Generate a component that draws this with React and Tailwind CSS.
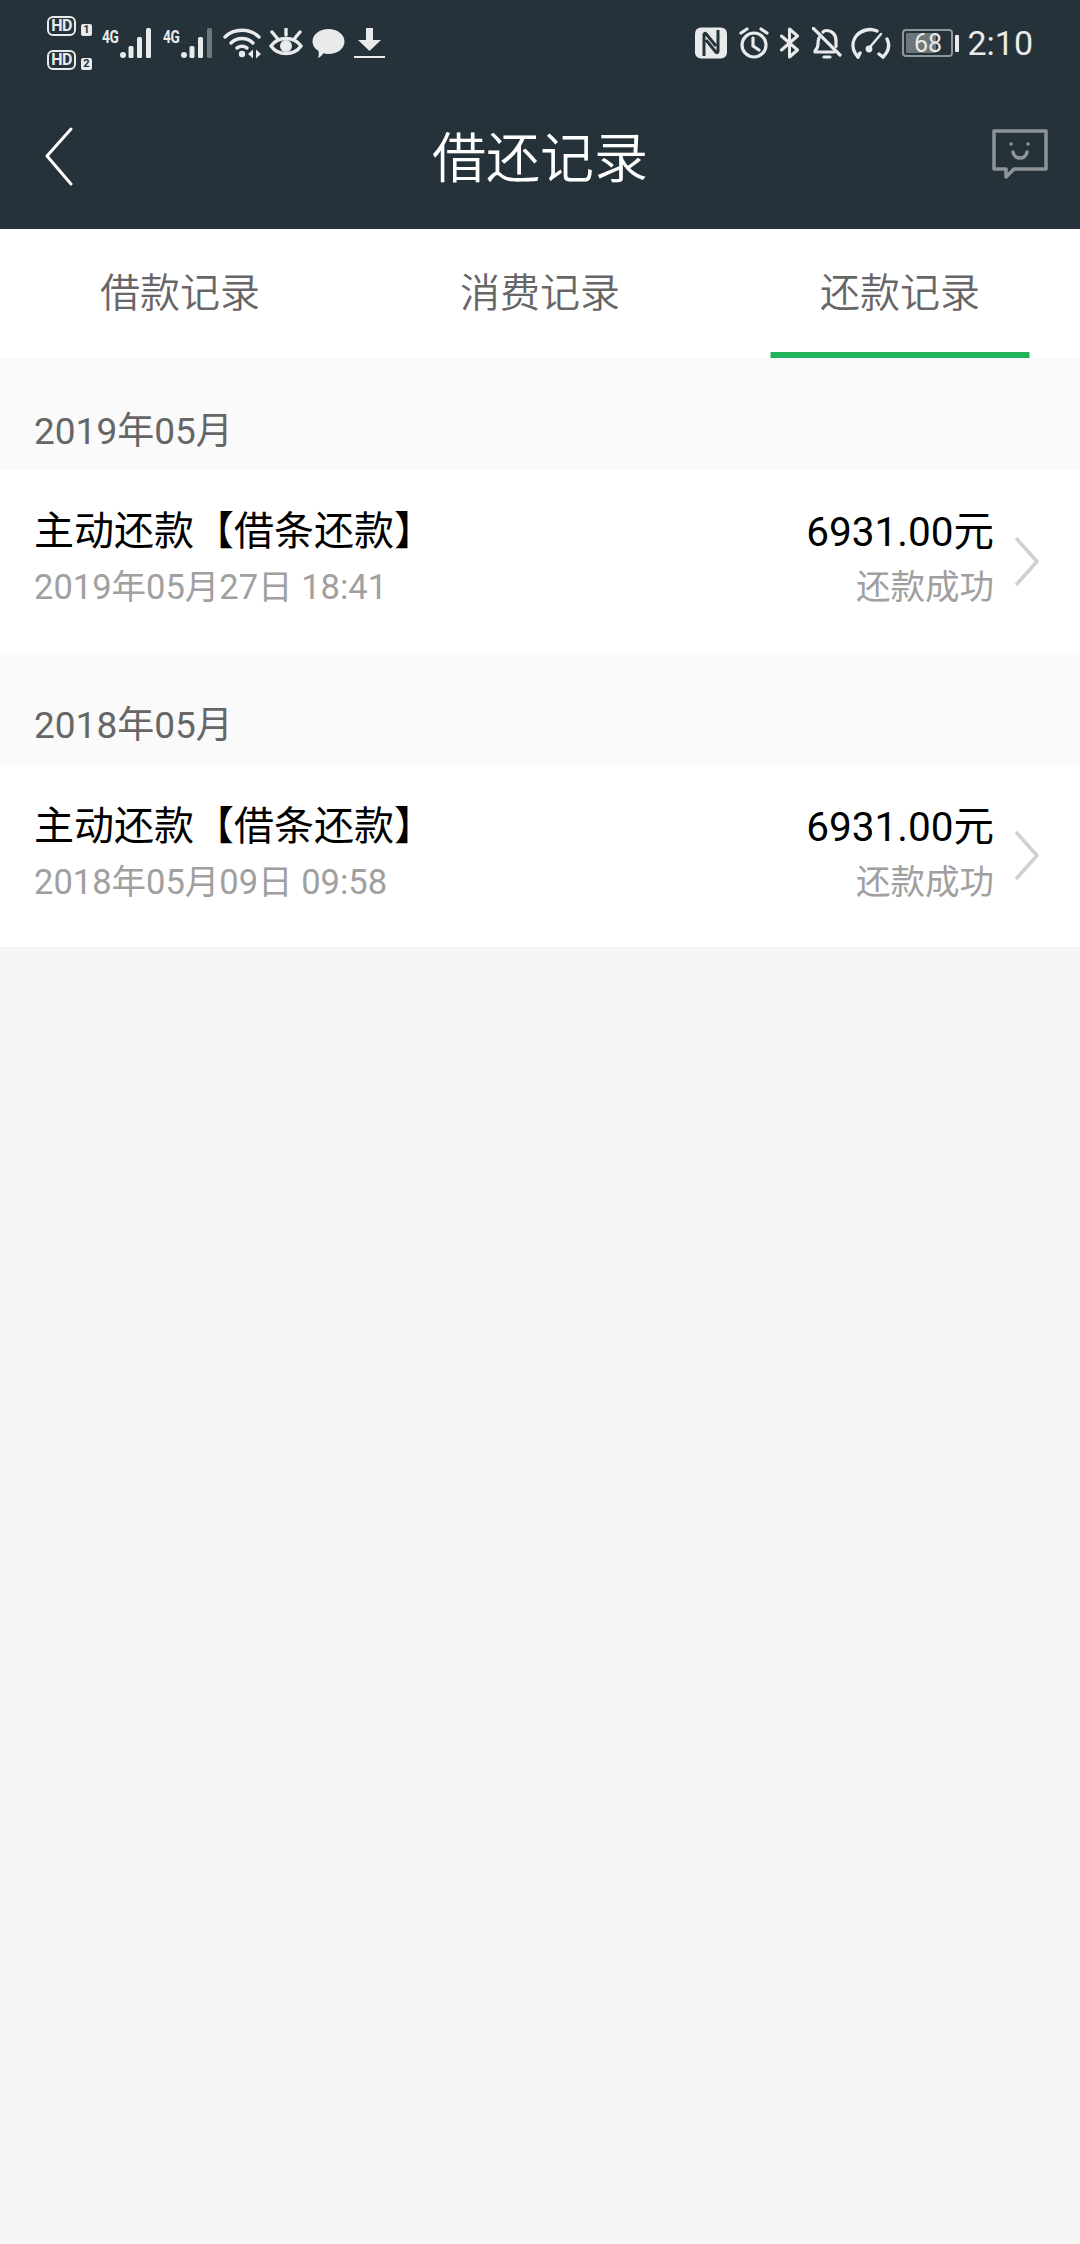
import { useState } from "react";

const FONT = "font-['Roboto','Noto_Sans_CJK_SC',sans-serif]";

const records = [
  { month: "2019年05月", title: "主动还款【借条还款】", date: "2019年05月27日 18:41", amount: "6931.00元", status: "还款成功" },
  { month: "2018年05月", title: "主动还款【借条还款】", date: "2018年05月09日 09:58", amount: "6931.00元", status: "还款成功" },
];

const tabs = ["借款记录", "消费记录", "还款记录"];

function HdBadge({ n }) {
  return (
    <div className="flex items-end h-[20px]">
      <div className="w-[29px] h-[20px] rounded-[6px] border-[2.5px] border-[#e8eaeb] text-[#e8eaeb] text-[16px] leading-[15px] font-bold text-center tracking-[-0.5px]">HD</div>
      <div className="ml-[5px] w-[11px] h-[12px] rounded-[2px] bg-[#e8eaeb] text-[#263239] text-[11px] leading-[12px] font-bold text-center">{n}</div>
    </div>
  );
}

function Signal({ last = "#e8eaeb" }) {
  return (
    <svg width="34" height="32" viewBox="0 0 34 32">
      <circle cx="3" cy="28" r="3" fill="#e8eaeb" />
      <rect x="8.500" y="19" width="5" height="12" rx="1.500" fill="#e8eaeb" />
      <rect x="17" y="10" width="5" height="21" rx="1.500" fill="#e8eaeb" />
      <rect x="26" y="1" width="5" height="30" rx="1.500" fill={last} />
    </svg>
  );
}

function FourG({ children }) {
  return <span className="w-[18px] -mt-[14px] text-[19px] leading-none font-bold text-[#e8eaeb] tracking-[-0.5px] scale-x-[0.72] origin-left">{children}</span>;
}

function Wifi() {
  return (
    <svg width="38" height="32" viewBox="0 0 38 32" fill="none" stroke="#e8eaeb" strokeWidth="3.400" strokeLinecap="round">
      <path d="M2 10C11 1 27 1 36 10" />
      <path d="M8 16C14 10 24 10 30 16" />
      <path d="M14 21C17 19 21 19 24 21" />
      <circle cx="19" cy="27" r="3.200" fill="#e8eaeb" stroke="none" />
      <path d="M30 22.500l-5 4.500 5 4.500zM33 22.500l5 4.500-5 4.500z" fill="#e8eaeb" stroke="none" />
    </svg>
  );
}

function Eye() {
  return (
    <svg width="34" height="30" viewBox="0 0 34 30" fill="none" stroke="#e8eaeb" strokeWidth="3.400" strokeLinecap="round">
      <path d="M2 18C9 8 25 8 32 18C25 28 9 28 2 18Z" />
      <circle cx="17" cy="18" r="6" fill="#e8eaeb" stroke="none" />
      <path d="M17 1v6M3 4l5 6M31 4l-5 6" />
    </svg>
  );
}

function Bubble() {
  return (
    <svg width="33" height="31" viewBox="0 0 33 31">
      <path d="M16.500 1C25.500 1 32.500 6.500 32.500 13.500S25.500 26 16.500 26C14.500 26 13 25.800 11.500 25.300C10 27.500 8 29.500 6 30C6.800 28 7 25.500 6.500 23C3 20.800 .5 17.500 .5 13.500C.5 6.500 7.500 1 16.500 1Z" fill="#e8eaeb" />
    </svg>
  );
}

function Download() {
  return (
    <svg width="32" height="32" viewBox="0 0 32 32" fill="#e8eaeb">
      <path d="M12 1h7v12h8L15.500 24 4 13h8z" />
      <rect x="0" y="29" width="31" height="2" />
    </svg>
  );
}

function Nfc() {
  return (
    <svg width="32" height="32" viewBox="0 0 32 32">
      <rect x="0" y="0.500" width="32" height="31" rx="6" fill="#e8eaeb" />
      <path d="M9 29V7.500c0-1.200 1.200-1.600 2-.7L21 19M23 3v21.500c0 1.200-1.200 1.600-2 .7L11 13" fill="none" stroke="#263239" strokeWidth="3" />
    </svg>
  );
}

function Alarm() {
  return (
    <svg width="32" height="32" viewBox="0 0 32 32" fill="none" stroke="#e8eaeb" strokeWidth="3.200" strokeLinecap="round">
      <circle cx="16" cy="18" r="12" />
      <path d="M15 11v8l6 4M3 6l6-4M29 6l-6-4" />
    </svg>
  );
}

function Bluetooth() {
  return (
    <svg width="20" height="32" viewBox="0 0 20 32" fill="none" stroke="#e8eaeb" strokeWidth="3" strokeLinecap="round" strokeLinejoin="round">
      <path d="M1.500 9l16 14-8 7V2l8 7-16 14" />
    </svg>
  );
}

function BellOff() {
  return (
    <svg width="30" height="32" viewBox="0 0 30 32" fill="none" stroke="#e8eaeb" strokeWidth="3.200" strokeLinecap="round" strokeLinejoin="round">
      <path d="M1 1l27 27" />
      <path d="M7 11c-1 2-1 4-1 6 0 3-1 5-3 7v1h19M11 5c1-1 2-1.500 3-1.500 6 0 10 4 10 10v6" />
      <path d="M12 30h6" />
    </svg>
  );
}

function Gauge() {
  return (
    <svg width="40" height="32" viewBox="0 0 40 32" fill="none" stroke="#e8eaeb" strokeWidth="3.400" strokeLinecap="round" strokeLinejoin="round">
      <path d="M7 30C0 22 1 14 6 8C11 3 19 1 26 4" />
      <path d="M36 12C39 18 38 24 32 30" />
      <path d="M7 30l2-4M32 30l-4-3" />
      <path d="M19 20L30 7" strokeWidth="2.400" />
      <circle cx="18" cy="22" r="3.400" fill="#e8eaeb" stroke="none" />
    </svg>
  );
}

function Battery() {
  return (
    <div className="flex items-center">
      <div className="relative w-[51px] h-[28px] rounded-[4px] border-2 border-[#8e979c] p-[2px]">
        <div className="h-full w-[68%] bg-[#6e7679] rounded-[1px]" />
        <span className="absolute inset-0 flex items-center justify-center text-[#e8eaeb] text-[25px] leading-none">68</span>
      </div>
      <div className="ml-[2px] w-[4px] h-[17px] rounded-[1px] bg-[#e8eaeb]" />
    </div>
  );
}

function StatusBar() {
  return (
    <div className="h-[86px] flex items-center justify-between pl-[47px] pr-[47px]">
      <div className="flex items-center">
        <div className="flex flex-col gap-[14px] w-[45px] mr-[10px]">
          <HdBadge n="1" />
          <HdBadge n="2" />
        </div>
        <FourG>4G</FourG>
        <Signal />
        <div className="w-[9px]" />
        <FourG>4G</FourG>
        <Signal last="#6f787d" />
        <div className="w-[8px]" />
        <Wifi />
        <div className="w-[8px]" />
        <Eye />
        <div className="w-[9px]" />
        <Bubble />
        <div className="w-[9px]" />
        <Download />
      </div>
      <div className="flex items-center">
        <Nfc />
        <div className="w-[11px]" />
        <Alarm />
        <div className="w-[10px]" />
        <Bluetooth />
        <div className="w-[12px]" />
        <BellOff />
        <div className="w-[9px]" />
        <Gauge />
        <div className="w-[11px]" />
        <Battery />
        <span className="ml-[8px] text-[34px] leading-none text-[#e8eaeb]">2:10</span>
      </div>
    </div>
  );
}

function Header() {
  return (
    <div className="bg-[#263239]">
      <StatusBar />
      <div className="h-[143px] grid grid-cols-[1fr_auto_1fr] items-center pl-[44px] pr-[32px]">
        <svg width="30" height="60" viewBox="0 0 30 60" fill="none" stroke="#ffffff" strokeWidth="3" strokeLinecap="round" strokeLinejoin="round" className="-mt-[2px]">
          <path d="M27 2L3 29L27 57" />
        </svg>
        <h1 className="text-[54px] leading-none text-white font-[350] pt-[5px] pr-[12px]">借还记录</h1>
        <svg width="56" height="52" viewBox="0 0 56 52" fill="none" stroke="#8f9497" strokeWidth="3.500" strokeLinejoin="round" className="-mt-[6px] justify-self-end">
          <path d="M2 2H54V40H22L14 48V40H2Z" />
          <circle cx="19" cy="15" r="1.800" fill="#8f9497" stroke="none" />
          <circle cx="36" cy="15" r="1.800" fill="#8f9497" stroke="none" />
          <path d="M21 23c1 8 13 8 14 0" strokeLinecap="round" />
        </svg>
      </div>
    </div>
  );
}

function Tabs() {
  const [active, setActive] = useState(2);
  return (
    <div className="grid grid-cols-3 h-[129px] bg-white">
      {tabs.map((t, i) => (
        <button key={t} onClick={() => setActive(i)} className="relative flex items-center justify-center text-[40px] leading-none font-[350] text-[#666666]">
          {t}
          {active === i && <span className="absolute bottom-0 left-1/2 -translate-x-1/2 w-[259px] h-[6px] bg-[#21b45a]" />}
        </button>
      ))}
    </div>
  );
}

function RecordRow({ r }) {
  return (
    <div className="h-[183px] bg-white flex items-center pl-[34px] pr-[41px]">
      <div className="flex-1 flex flex-col gap-[14px] pb-[4px]">
        <div className="text-[40px] leading-[42px] text-black">{r.title}</div>
        <div className="text-[34.500px] leading-[40px] text-[#a0a0a0]">{r.date}</div>
      </div>
      <div className="flex flex-col items-end gap-[14px] pb-[4px]">
        <div className="text-[40.500px] leading-[42px] text-black">{r.amount}</div>
        <div className="text-[34.500px] leading-[40px] text-[#a0a0a0]">{r.status}</div>
      </div>
      <svg width="25" height="49" viewBox="0 0 25 49" fill="none" stroke="#d0d0d0" strokeWidth="3.500" strokeLinejoin="round" className="ml-[20px]">
        <path d="M2 1L23 24.500L2 48" />
      </svg>
    </div>
  );
}

export default function App() {
  return (
    <div className={`min-h-[2244px] bg-[#f5f5f5] ${FONT}`}>
      <Header />
      <Tabs />
      {records.map((r) => (
        <div key={r.month}>
          <div className="h-[111.500px] bg-[#fafafa] flex items-end pl-[34px] pb-[16px] text-[37px] leading-[44px] text-[#666666]">{r.month}</div>
          <RecordRow r={r} />
        </div>
      ))}
    </div>
  );
}
